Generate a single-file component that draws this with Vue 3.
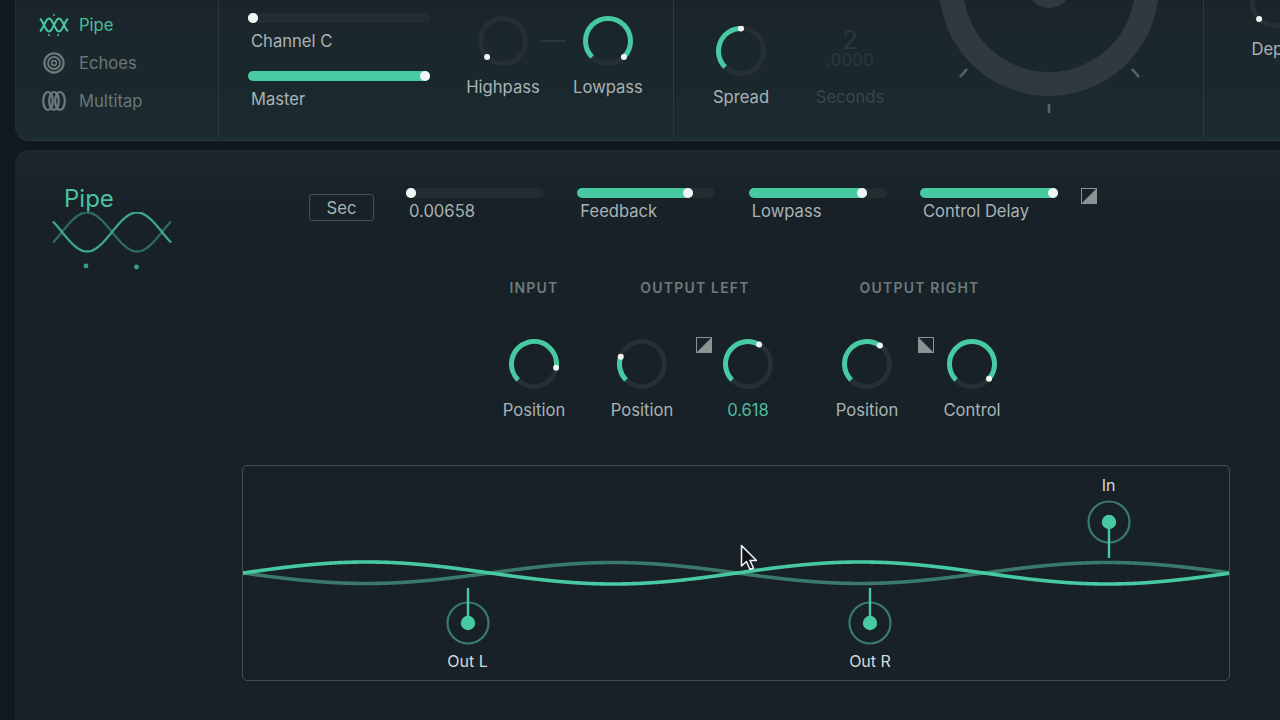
<script setup>
const TEAL = '#47c9a2'

function polar(cx, cy, r, deg) {
  const a = (deg - 90) * Math.PI / 180
  return [cx + r * Math.cos(a), cy + r * Math.sin(a)]
}
function arc(value) {
  const start = -135
  const end = start + 270 * value
  const [x0, y0] = polar(25, 25, 22.5, start)
  const [x1, y1] = polar(25, 25, 22.5, end)
  const large = end - start > 180 ? 1 : 0
  return `M${x0.toFixed(2)} ${y0.toFixed(2)}A22.5 22.5 0 ${large} 1 ${x1.toFixed(2)} ${y1.toFixed(2)}`
}
function dot(value) {
  const [x, y] = polar(25, 25, 22.5, -135 + 270 * value)
  return { x: x.toFixed(2), y: y.toFixed(2) }
}
function sine(x0, x1, y, amp, period, phase, sign) {
  let d = ''
  for (let x = x0; x <= x1; x += 1) {
    const v = y - sign * amp * Math.sin(2 * Math.PI * (x - phase) / period)
    d += (d ? 'L' : 'M') + x + ' ' + v.toFixed(2)
  }
  return d
}

const filters = [
  { label: 'Highpass', value: 0 },
  { label: 'Lowpass', value: 1 }
]
const knob = (label, value, accent = false) => ({ label, value, accent })
const spread = knob('Spread', 0.5)
const depth = knob('Depth', 0)
const input = knob('Position', 0.87)
const outL = [knob('Position', 0.237), knob('0.618', 0.61, true)]
const outR = [knob('Position', 0.63), knob('Control', 0.985)]
const sliders = [
  { label: '0.00658', value: 0.035 },
  { label: 'Feedback', value: 0.84 },
  { label: 'Lowpass', value: 0.855 },
  { label: 'Control Delay', value: 1 }
]
const navItems = [
  { label: 'Pipe', active: true, icon: 'pipe' },
  { label: 'Echoes', icon: 'echoes' },
  { label: 'Multitap', icon: 'multitap' }
]
const waveBright = sine(0, 986, 107, 11, 494, 0, 1)
const waveDim = sine(0, 986, 107, 10.5, 494, 0, -1)
const logoBright = sine(1, 119, 20, 19.5, 100, 10, -1)
const logoDim = sine(1, 119, 20, 19.5, 100, 10, 1)
const navBright = sine(0, 28, 10, 6.5, 20, 4, -1)
const navDim = sine(0, 28, 10, 6.5, 20, 4, 1)
const pins = [
  { label: 'In', x: 865.5, top: 9, up: true },
  { label: 'Out L', x: 224.5, top: 135, up: false },
  { label: 'Out R', x: 627, top: 135, up: false }
]
</script>

<template>
  <div class="app">
    <section class="top">
      <nav class="nav">
        <div v-for="n in navItems" :key="n.label" class="nav-item" :class="{ active: n.active }">
          <svg class="nav-icon" width="30" height="24" viewBox="0 0 30 24">
            <g v-if="n.icon === 'pipe'" transform="translate(1 2)" fill="none" stroke="#47c9a2" stroke-width="2">
              <path :d="navBright" />
              <path :d="navDim" />
              <circle cx="9" cy="20" r="1" fill="#47c9a2" stroke="none" />
              <circle cx="18" cy="20" r="1" fill="#47c9a2" stroke="none" />
              <circle cx="14" cy="0" r="0.9" fill="#47c9a2" stroke="none" />
            </g>
            <g v-else-if="n.icon === 'echoes'" fill="none" stroke="#6f7a7c">
              <circle cx="15" cy="12" r="9.6" stroke-width="2.2" />
              <circle cx="15" cy="12" r="6" stroke-width="1.8" />
              <circle cx="15" cy="12" r="2.4" stroke-width="1.6" />
            </g>
            <g v-else fill="none" stroke="#6f7a7c" stroke-width="2.2">
              <ellipse cx="9" cy="12" rx="4.8" ry="9" />
              <ellipse cx="15" cy="12" rx="4.8" ry="9" />
              <ellipse cx="21" cy="12" rx="4.8" ry="9" />
            </g>
          </svg>
          <span>{{ n.label }}</span>
        </div>
      </nav>

      <div class="sec sec-filters">
        <div class="master">
          <div class="slider-cell wide">
            <div class="track"><div class="fill" style="width: 3%"></div></div>
            <div class="slider-label">Channel C</div>
          </div>
          <div class="slider-cell wide">
            <div class="track"><div class="fill" style="width: 100%"></div></div>
            <div class="slider-label">Master</div>
          </div>
        </div>
        <div class="filter-row">
          <template v-for="(k, i) in filters" :key="k.label">
            <div class="knob">
              <svg width="50" height="50" viewBox="0 0 50 50">
                <circle cx="25" cy="25" r="22.5" class="k-track" />
                <path v-if="k.value > 0" :d="arc(k.value)" class="k-val" />
                <circle :cx="dot(k.value).x" :cy="dot(k.value).y" r="3" class="k-dot" />
              </svg>
              <div class="k-label">{{ k.label }}</div>
            </div>
            <div v-if="i === 0" class="connector"></div>
          </template>
        </div>
      </div>

      <div class="sec sec-spread">
        <div class="knob">
          <svg width="50" height="50" viewBox="0 0 50 50">
            <circle cx="25" cy="25" r="22.5" class="k-track" />
            <path :d="arc(spread.value)" class="k-val" />
            <circle :cx="dot(spread.value).x" :cy="dot(spread.value).y" r="3" class="k-dot" />
          </svg>
          <div class="k-label">{{ spread.label }}</div>
        </div>
        <div class="seconds">
          <div class="sec-num">
            <span class="n-big">2</span>
            <span class="n-small">.0000</span>
          </div>
          <div class="k-label dim">Seconds</div>
        </div>
        <svg class="big-knob" width="240" height="130" viewBox="-120 14 240 130">
          <circle cx="0" cy="0" r="98" fill="none" stroke="#30393e" stroke-width="24" />
          <circle cx="0" cy="0" r="22" fill="#30393e" />
          <g stroke="#5a6466" stroke-width="2.6">
            <path d="M0 118V127" />
            <path d="M-89 91L-82 83" />
            <path d="M83 83L90 91" />
          </g>
        </svg>
      </div>

      <div class="sec sec-depth">
        <div class="knob">
          <svg width="50" height="50" viewBox="0 0 50 50">
            <circle cx="25" cy="25" r="22.5" class="k-track" />
            <circle :cx="dot(depth.value).x" :cy="dot(depth.value).y" r="3" class="k-dot" />
          </svg>
          <div class="k-label">{{ depth.label }}</div>
        </div>
      </div>
    </section>

    <section class="main">
      <aside class="logo">
        <div class="logo-title">Pipe</div>
        <svg width="120" height="60" viewBox="0 0 120 60" fill="none">
          <path :d="logoDim" stroke="#2f6a5d" stroke-width="2.3" />
          <path :d="logoBright" stroke="#3ea78a" stroke-width="2.3" />
          <circle cx="34" cy="54" r="2.4" fill="#3a9f84" />
          <circle cx="84.5" cy="55" r="2.4" fill="#3a9f84" />
        </svg>
      </aside>

      <div class="content">
        <div class="slider-row">
          <button class="sec-btn">Sec</button>
          <div v-for="s in sliders" :key="s.label" class="slider-cell">
            <div class="track"><div class="fill" :style="{ width: s.value * 100 + '%' }"></div></div>
            <div class="slider-label">{{ s.label }}</div>
          </div>
          <svg class="toggle tg-top" width="16" height="16" viewBox="0 0 16 16">
            <rect x="0.5" y="0.5" width="15" height="15" fill="#1a2329" stroke="#8b9494" />
            <path d="M0 16L16 0V16Z" fill="#8b9494" />
          </svg>
        </div>

        <div class="groups">
          <div class="group">
            <h4>INPUT</h4>
            <div class="group-knobs">
              <div class="knob">
                <svg width="50" height="50" viewBox="0 0 50 50">
                  <circle cx="25" cy="25" r="22.5" class="k-track" />
                  <path :d="arc(input.value)" class="k-val" />
                  <circle :cx="dot(input.value).x" :cy="dot(input.value).y" r="3" class="k-dot" />
                </svg>
                <div class="k-label">{{ input.label }}</div>
              </div>
            </div>
          </div>
          <div class="group g-left">
            <h4>OUTPUT LEFT</h4>
            <div class="group-knobs">
              <div class="knob">
                <svg width="50" height="50" viewBox="0 0 50 50">
                  <circle cx="25" cy="25" r="22.5" class="k-track" />
                  <path :d="arc(outL[0].value)" class="k-val" />
                  <circle :cx="dot(outL[0].value).x" :cy="dot(outL[0].value).y" r="3" class="k-dot" />
                </svg>
                <div class="k-label">{{ outL[0].label }}</div>
              </div>
              <svg class="toggle tg-l" width="16" height="16" viewBox="0 0 16 16">
                <rect x="0.5" y="0.5" width="15" height="15" fill="#1a2329" stroke="#8b9494" />
                <path d="M0 16L16 0V16Z" fill="#8b9494" />
              </svg>
              <div class="knob">
                <svg width="50" height="50" viewBox="0 0 50 50">
                  <circle cx="25" cy="25" r="22.5" class="k-track" />
                  <path :d="arc(outL[1].value)" class="k-val" />
                  <circle :cx="dot(outL[1].value).x" :cy="dot(outL[1].value).y" r="3" class="k-dot" />
                </svg>
                <div class="k-label accent">{{ outL[1].label }}</div>
              </div>
            </div>
          </div>
          <div class="group g-right">
            <h4>OUTPUT RIGHT</h4>
            <div class="group-knobs">
              <div class="knob">
                <svg width="50" height="50" viewBox="0 0 50 50">
                  <circle cx="25" cy="25" r="22.5" class="k-track" />
                  <path :d="arc(outR[0].value)" class="k-val" />
                  <circle :cx="dot(outR[0].value).x" :cy="dot(outR[0].value).y" r="3" class="k-dot" />
                </svg>
                <div class="k-label">{{ outR[0].label }}</div>
              </div>
              <svg class="toggle tg-r" width="16" height="16" viewBox="0 0 16 16">
                <rect x="0.5" y="0.5" width="15" height="15" fill="#1a2329" stroke="#8b9494" />
                <path d="M0 0L16 16H0Z" fill="#8b9494" />
              </svg>
              <div class="knob">
                <svg width="50" height="50" viewBox="0 0 50 50">
                  <circle cx="25" cy="25" r="22.5" class="k-track" />
                  <path :d="arc(outR[1].value)" class="k-val" />
                  <circle :cx="dot(outR[1].value).x" :cy="dot(outR[1].value).y" r="3" class="k-dot" />
                </svg>
                <div class="k-label">{{ outR[1].label }}</div>
              </div>
            </div>
          </div>
        </div>

        <div class="wave-box">
          <svg class="waves" width="986" height="214" viewBox="0 0 986 214" fill="none">
            <path :d="waveDim" stroke="#3b7a6b" stroke-width="3.6" />
            <path :d="waveBright" :stroke="TEAL" stroke-width="3.6" />
          </svg>
          <div v-for="p in pins" :key="p.label" class="pin" :style="{ left: p.x + 'px', top: p.top + 'px' }">
            <div v-if="p.up" class="pin-label up">{{ p.label }}</div>
            <svg class="pin-svg" width="44" height="44" viewBox="0 0 44 44" fill="none">
              <circle cx="22" cy="22" r="20.5" stroke="#3a7a6c" stroke-width="2.2" />
              <path :d="p.up ? 'M22 22V58' : 'M22 22V-13'" stroke="#47c9a2" stroke-width="2.4" />
              <circle cx="22" cy="22" r="7.2" fill="#47c9a2" />
            </svg>
            <div v-if="!p.up" class="pin-label down">{{ p.label }}</div>
          </div>
          <svg class="cursor" width="20" height="28" viewBox="0 0 20 28">
            <path d="M1.5 1.5V22L6.5 17.5L10 25.5L13.5 24L10 16.5H16.5Z" fill="#10161a" stroke="#f2f4f4" stroke-width="1.5" stroke-linejoin="round" />
          </svg>
        </div>
      </div>
    </section>
  </div>
</template>

<style>
html, body { margin: 0; background: #12191e; }
</style>

<style scoped>
.app {
  width: 1280px;
  height: 720px;
  overflow: hidden;
  background: #12191e;
  font-family: Inter, "Liberation Sans", sans-serif;
  font-size: 16.6px;
  color: #a9b3b3;
  display: flex;
  flex-direction: column;
  padding-left: 15px;
  box-sizing: border-box;
}
.top {
  flex: none;
  height: 141px;
  box-sizing: border-box;
  width: 1290px;
  display: flex;
  background: linear-gradient(180deg, #1a252a 0%, #1b2b30 100%);
  border-bottom: 1.5px solid #2c3a3e;
  border-left: 1px solid #1f2c31;
  border-bottom-left-radius: 14px;
}
.nav {
  flex: none;
  width: 202px;
  box-sizing: border-box;
  padding: 13px 0 0 23px;
  display: flex;
  flex-direction: column;
  gap: 14px;
}
.nav-item {
  height: 24px;
  display: flex;
  align-items: center;
  gap: 10px;
  color: #6b7678;
}
.nav-item.active { color: #45bf9c; }
.sec {
  flex: none;
  box-sizing: border-box;
  height: 138px;
  border-left: 1px solid #2c3a3e;
  display: flex;
  align-items: flex-start;
}
.sec-filters { width: 455px; padding: 13px 0 0 29px; }
.master { width: 182px; display: flex; flex-direction: column; gap: 20px; }
.master .slider-label { margin-top: 8px; }
.filter-row { display: flex; align-items: flex-start; margin: 3px 0 0 35px; }
.connector {
  flex: none;
  width: 25px;
  height: 2px;
  background: #2c373b;
  margin: 24px 4px 0 0;
}
.sec-spread { width: 530px; padding: 26px 0 0 29px; }
.seconds {
  width: 76px;
  margin-left: 33px;
  display: flex;
  flex-direction: column;
  align-items: center;
}
.sec-num {
  height: 50px;
  box-sizing: border-box;
  padding-top: 2px;
  display: flex;
  flex-direction: column;
  align-items: center;
  color: #2d373b;
}
.n-big { font-size: 26px; line-height: 24px; }
.n-small { font-size: 17px; line-height: 17px; letter-spacing: 0.2px; }
.big-knob { flex: none; margin: -26px 0 0 41px; }
.sec-depth { width: 110px; padding: 0 0 0 33px; }
.sec-depth .knob { margin-top: -22px; }

.knob {
  flex: none;
  width: 76px;
  display: flex;
  flex-direction: column;
  align-items: center;
}
.knob svg { display: block; }
.k-track { fill: none; stroke: #262f34; stroke-width: 5; }
.k-val { fill: none; stroke: #47c9a2; stroke-width: 5; }
.k-dot { fill: #f1f6f4; }
.k-label {
  margin-top: 11px;
  height: 20px;
  line-height: 20px;
  white-space: nowrap;
}
.k-label.dim { color: #3a4549; }
.k-label.accent { color: #4dbb9b; }

.main {
  flex: 1;
  width: 1290px;
  margin-top: 9px;
  display: flex;
  background: linear-gradient(180deg, #1c282e 0, #172127 60px);
  border-top: 1px solid #20292e;
  border-left: 1px solid #1c262b;
  border-top-left-radius: 14px;
  box-sizing: border-box;
}
.logo {
  flex: none;
  width: 226px;
  box-sizing: border-box;
  padding: 33px 0 0 36px;
}
.logo svg { display: block; }
.logo-title {
  margin-left: 12px;
  height: 28px;
  line-height: 30px;
  font-size: 24px;
  color: #4cc09f;
}
.content { flex: none; width: 988px; padding-top: 37px; }
.slider-row { display: flex; align-items: flex-start; padding-left: 67px; }
.sec-btn {
  flex: none;
  width: 65px;
  height: 27px;
  margin: 6px 32px 0 0;
  padding: 0;
  background: transparent;
  border: 1.5px solid #465154;
  border-radius: 3px;
  color: #a9b3b3;
  font: inherit;
  box-sizing: border-box;
}
.slider-cell { flex: none; width: 138px; margin-right: 33.33px; }
.slider-cell.wide { width: 182px; margin: 0; }
.track {
  height: 10px;
  border-radius: 5px;
  background: #232c31;
  display: flex;
}
.fill {
  position: relative;
  height: 10px;
  border-radius: 5px;
  background: #47c9a2;
  min-width: 10px;
}
.fill::after {
  content: "";
  position: absolute;
  right: 0;
  top: 0;
  width: 10px;
  height: 10px;
  border-radius: 50%;
  background: #eef5f2;
}
.slider-label {
  margin: 3px 0 0 3px;
  height: 20px;
  line-height: 20px;
  white-space: nowrap;
}
.toggle { display: block; flex: none; }
.tg-top { margin-left: -10px; }
.groups { display: flex; align-items: flex-start; margin: 56px 0 0 254px; }
.group { flex: none; }
.g-left { margin-left: 32px; }
.g-right { margin-left: 43px; }
h4 {
  margin: 0 0 42px;
  height: 20px;
  line-height: 21px;
  font-size: 14px;
  font-weight: 600;
  letter-spacing: 1.2px;
  color: #6e7a7c;
  text-align: center;
}
.group-knobs { display: flex; align-items: flex-start; }
.tg-l { margin: -2px -2px 0 16px; }
.tg-r { margin: -2px 0 0 13px; }
.wave-box {
  position: relative;
  width: 988px;
  height: 216px;
  margin-top: 45px;
  box-sizing: border-box;
  border: 1px solid #434e51;
  border-radius: 5px;
}
.waves { display: block; }
.pin {
  position: absolute;
  width: 70px;
  transform: translateX(-50%);
  display: flex;
  flex-direction: column;
  align-items: center;
}
.pin-svg { display: block; overflow: visible; flex: none; }
.pin-label {
  height: 20px;
  line-height: 20px;
  color: #d3dada;
  font-size: 16px;
  white-space: nowrap;
}
.pin-label.up { margin-bottom: 5px; }
.pin-label.down { margin-top: 6px; }
.cursor { position: absolute; left: 497px; top: 78px; }
</style>
